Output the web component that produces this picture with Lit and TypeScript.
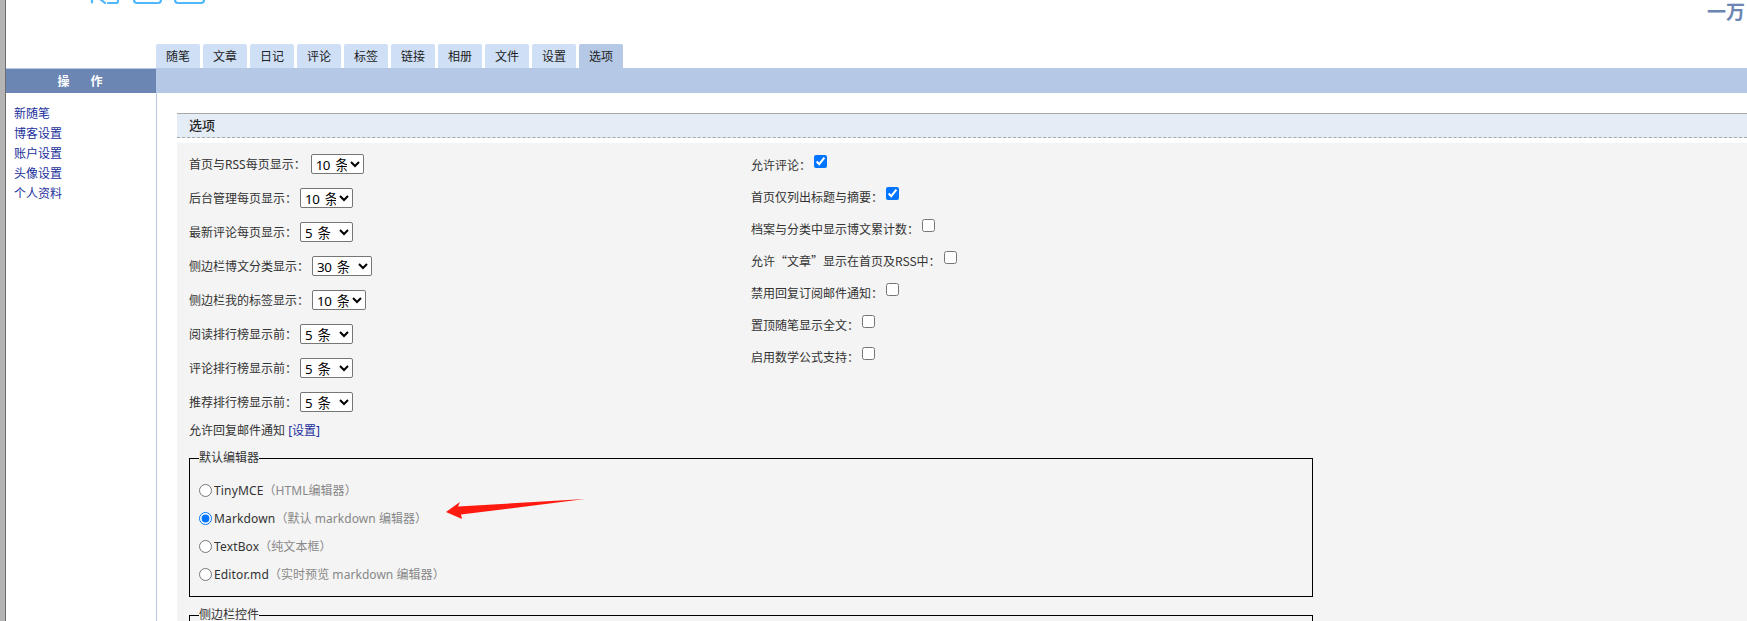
import { LitElement, html, css } from "lit";
import { customElement } from "lit/decorators.js";

const TABS = ["随笔", "文章", "日记", "评论", "标签", "链接", "相册", "文件", "设置", "选项"];
const LINKS = ["新随笔", "博客设置", "账户设置", "头像设置", "个人资料"];
const SELECTS: [string, string, string][] = [
  ["首页与RSS每页显示：", "10 条", "w53"],
  ["后台管理每页显示：", "10 条", "w53"],
  ["最新评论每页显示：", "5 条", "w53"],
  ["侧边栏博文分类显示：", "30 条", "w60"],
  ["侧边栏我的标签显示：", "10 条", "w54"],
  ["阅读排行榜显示前：", "5 条", "w53"],
  ["评论排行榜显示前：", "5 条", "w53"],
  ["推荐排行榜显示前：", "5 条", "w53"],
];
const CHECKS: [string, boolean][] = [
  ["允许评论：", true],
  ["首页仅列出标题与摘要：", true],
  ["档案与分类中显示博文累计数：", false],
  ["允许“文章”显示在首页及RSS中：", false],
  ["禁用回复订阅邮件通知：", false],
  ["置顶随笔显示全文：", false],
  ["启用数学公式支持：", false],
];
const EDITORS: [string, string, boolean][] = [
  ["TinyMCE", "（HTML编辑器）", false],
  ["Markdown", "（默认 markdown 编辑器）", true],
  ["TextBox", "（纯文本框）", false],
  ["Editor.md", "（实时预览 markdown 编辑器）", false],
];

@customElement("app-root")
export class AppRoot extends LitElement {
  static styles = css`
    :host {
      display: block;
      height: 621px;
      overflow: hidden;
      background: #fff;
      font-family: "Noto Sans", "Noto Sans CJK SC", sans-serif;
      font-size: 12px;
      color: #333;
    }
    .page {
      height: 621px;
      display: flex;
      border-left: 5px solid #b4b4b4;
      overflow: hidden;
    }
    .inner {
      flex: 1;
      min-width: 0;
      border-left: 1px solid #6e6e6e;
      display: flex;
      flex-direction: column;
    }
    .header {
      height: 44px;
      display: flex;
      justify-content: space-between;
      align-items: flex-start;
      flex: none;
    }
    .logo {
      display: block;
      margin-left: 82px;
    }
    .owner {
      font-size: 19px;
      font-weight: 700;
      line-height: 25px;
      color: #6b86b3;
      padding-right: 2px;
    }
    .tabs {
      height: 24px;
      display: flex;
      gap: 3px;
      padding-left: 150px;
      flex: none;
    }
    .tab {
      width: 44px;
      background: #cfdff6;
      border-radius: 2px 2px 0 0;
      text-align: center;
      line-height: 26px;
      color: #222;
    }
    .tab.active {
      background: #b5c8e6;
    }
    .bar {
      height: 25px;
      flex: none;
      display: flex;
      background: #b5c8e6;
    }
    .bar-head {
      width: 150px;
      margin-top: 1px;
      background: #6b86b3;
      color: #fff;
      font-weight: 700;
      display: flex;
      justify-content: center;
      align-items: center;
      gap: 21px;
      padding-right: 2px;
      box-sizing: border-box;
    }
    .body {
      flex: 1;
      display: flex;
      min-height: 0;
    }
    .side {
      flex: none;
      box-sizing: content-box;
      border-right: 1px solid #b5c8e6;
      padding: 11px 0 0 8px;
      width: 142px;
    }
    .side a {
      display: block;
      height: 20px;
      line-height: 20px;
      color: #1a2f9c;
      text-decoration: none;
    }
    .main {
      flex: 1;
      min-width: 0;
      padding: 20px 0 0 20px;
    }
    .title {
      height: 23px;
      box-sizing: content-box;
      background: #e4ecf6;
      border-top: 1px solid #a8a8a8;
      border-bottom: 1px dashed #a8a8a8;
      padding-left: 12px;
      font-size: 13px;
      line-height: 23px;
      font-weight: 500;
      color: #222;
      margin-bottom: 5px;
    }
    .panel {
      background: #f4f4f4;
      height: 480px;
      padding: 11px 0 0 12px;
      box-sizing: border-box;
    }
    .cols {
      display: flex;
      align-items: flex-start;
    }
    .col-left {
      width: 562px;
      flex: none;
    }
    .row {
      height: 34px;
      display: flex;
      align-items: flex-start;
      gap: 3px;
      line-height: 21px;
    }
    .row span {
      white-space: nowrap;
    }
    select {
      height: 20px;
      box-sizing: border-box;
      margin: 0;
      padding: 0;
      font-family: "Noto Sans", "Noto Sans CJK SC", sans-serif;
      font-size: 13.33px;
      letter-spacing: -0.5px;
      word-spacing: 2.5px;
      color: #000;
      background-color: #fff;
      border: 1px solid #767676;
      border-radius: 2px;
    }
    .w53 { width: 53px; }
    .w54 { width: 54px; }
    .w60 { width: 60px; }
    .first { margin-left: 2px; }
    .col-right {
      padding-top: 2px;
    }
    .check {
      height: 32px;
      display: flex;
      gap: 3px;
      font-family: "Noto Sans CJK SC", sans-serif;
      line-height: 18px;
      white-space: nowrap;
    }
    .check input {
      width: 13px;
      height: 13px;
      margin: -1px 0 0;
    }
    .mail {
      height: 20px;
      line-height: 20px;
      margin-top: -5px;
    }
    .mail a {
      color: #1a2f9c;
      text-decoration: none;
    }
    fieldset {
      width: 1124px;
      box-sizing: border-box;
      margin: 9px 0 0;
      padding: 0 0 0 9px;
      border: 1px solid #000;
      height: 147px;
      min-width: 0;
    }
    legend {
      padding: 0;
      margin-left: 0;
      line-height: 16px;
      color: #333;
    }
    .editors {
      padding-top: 10px;
      position: relative;
    }
    .editor {
      height: 28px;
      display: flex;
      align-items: center;
      gap: 2px;
      white-space: nowrap;
      letter-spacing: 0.15px;
    }
    .editor input {
      width: 13px;
      height: 13px;
      margin: 0;
    }
    .editor em {
      font-style: normal;
      color: #888;
      letter-spacing: 0.05px;
    }
    .arrow {
      position: absolute;
      left: 0;
      top: 0;
      pointer-events: none;
    }
    .next {
      height: 60px;
      margin-top: 10px;
    }
  `;

  render() {
    return html`
      <div class="page">
        <div class="inner">
          <div class="header">
            <svg class="logo" width="130" height="8" viewBox="0 0 130 8" fill="none" stroke="#4db8ff" stroke-width="2.2" stroke-linecap="round" aria-hidden="true">
              <path d="M4 -2V2.500"/>
              <path d="M12 -1L17 3"/>
              <path d="M30 -2V1Q30 3 28 3H20"/>
              <path d="M46 -4V0Q46 3 49 3H70Q73 3 73 0V-4"/>
              <path d="M87 -4V0Q87 3 90 3H113Q116 3 116 0V-4"/>
            </svg>
            <div class="owner">一万</div>
          </div>
          <div class="tabs">
            ${TABS.map((t, i) => html`<div class="tab ${i === 9 ? "active" : ""}">${t}</div>`)}
          </div>
          <div class="bar">
            <div class="bar-head"><span>操</span><span>作</span></div>
          </div>
          <div class="body">
            <nav class="side">
              ${LINKS.map((l) => html`<a href="#">${l}</a>`)}
            </nav>
            <div class="main">
              <div class="title">选项</div>
              <div class="panel">
                <div class="cols">
                  <div class="col-left">
                    ${SELECTS.map(
                      ([label, val, w], i) => html`
                        <div class="row">
                          <span>${label}</span>
                          <select class="${w} ${i === 0 ? "first" : ""}"><option>${val}</option></select>
                        </div>
                      `
                    )}
                  </div>
                  <div class="col-right">
                    ${CHECKS.map(
                      ([label, on]) => html`
                        <label class="check"><span>${label}</span><input type="checkbox" .checked=${on} /></label>
                      `
                    )}
                  </div>
                </div>
                <div class="mail">允许回复邮件通知 <a href="#">[设置]</a></div>
                <fieldset>
                  <legend>默认编辑器</legend>
                  <div class="editors">
                    ${EDITORS.map(
                      ([name, note, on]) => html`
                        <label class="editor">
                          <input type="radio" name="editor" .checked=${on} />
                          <span>${name}<em>${note}</em></span>
                        </label>
                      `
                    )}
                    <svg class="arrow" width="420" height="60" viewBox="0 0 420 60" aria-hidden="true">
                      <path fill="#ff1a10" d="M247 46L261 36L259 40.500L386 33L262 48.500L263 53Z"/>
                    </svg>
                  </div>
                </fieldset>
                <fieldset class="next">
                  <legend>侧边栏控件</legend>
                </fieldset>
              </div>
            </div>
          </div>
        </div>
      </div>
    `;
  }
}
